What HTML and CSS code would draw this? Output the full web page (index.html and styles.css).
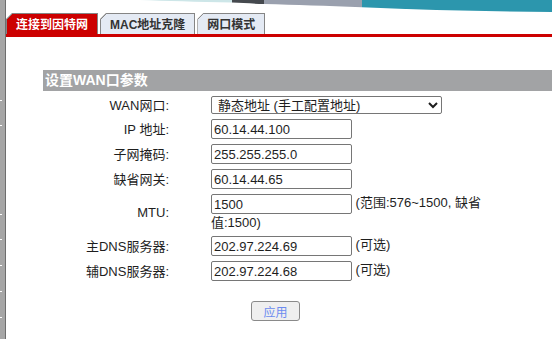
FILE: index.html
```html
<!DOCTYPE html>
<html lang="zh-CN">
<head>
    <meta charset="UTF-8">
    <title>WAN口设置</title>
    <link rel="stylesheet" href="styles.css">
</head>
<body>
    <div class="page">
        <div class="side">
            <span class="tick t1"></span>
            <span class="tick t2"></span>
            <span class="tick t3"></span>
            <span class="tick t4"></span>
            <span class="tick t5"></span>
            <span class="tick t6"></span>
            <span class="tick t7"></span>
        </div>
        <div class="main">
            <svg class="banner" viewBox="0 0 546 13" width="546" height="13">
                <path d="M134 0 L226 0 L226 2.6 C190 1.8 160 1 134 0 Z" fill="#cde6e8"/>
                <path d="M226 0 L258 0 L258 4.1 C246 3.6 236 3.1 226 2.6 Z" fill="#45494e"/>
                <path d="M258 0 L356 0 L356 7.3 C320 6 290 5 258 4.1 Z" fill="#9aa0ae"/>
                <path d="M356 0 L546 0 L546 12 C480 11.5 420 10 356 7.3 Z" fill="#2c96ad"/>
            </svg>
            <div class="tabs">
                <div class="tab active">连接到因特网</div>
                <div class="tab">MAC地址克隆</div>
                <div class="tab">网口模式</div>
            </div>
            <div class="content">
                <div class="section-title">设置WAN口参数</div>
                <div class="form">
                    <div class="row">
                        <label>WAN网口:</label>
                        <div class="field">
                            <select>
                                <option>静态地址 (手工配置地址)</option>
                                <option>动态地址 (DHCP)</option>
                                <option>PPPoE</option>
                            </select>
                        </div>
                    </div>
                    <div class="row">
                        <label>IP 地址:</label>
                        <div class="field"><input type="text" value="60.14.44.100"></div>
                    </div>
                    <div class="row">
                        <label>子网掩码:</label>
                        <div class="field"><input type="text" value="255.255.255.0"></div>
                    </div>
                    <div class="row">
                        <label>缺省网关:</label>
                        <div class="field"><input type="text" value="60.14.44.65"></div>
                    </div>
                    <div class="row">
                        <label>MTU:</label>
                        <div class="field"><input type="text" value="1500"> (范围:576~1500, 缺省值:1500)</div>
                    </div>
                    <div class="row">
                        <label>主DNS服务器:</label>
                        <div class="field"><input type="text" value="202.97.224.69"> (可选)</div>
                    </div>
                    <div class="row">
                        <label>辅DNS服务器:</label>
                        <div class="field"><input type="text" value="202.97.224.68"> (可选)</div>
                    </div>
                </div>
                <div class="actions">
                    <button>应用</button>
                </div>
            </div>
        </div>
    </div>
</body>
</html>
```

FILE: styles.css
```css
body {
    margin: 0;
    font-family: "Liberation Sans", "Noto Sans CJK SC", sans-serif;
    font-size: 13px;
    line-height: 17px;
    color: #1e1e1e;
    background: #fff;
}
.page {
    display: flex;
    height: 339px;
    overflow: hidden;
}
.side {
    position: relative;
    flex: none;
    width: 5px;
    background: #a6a6a6;
    border-right: 1px solid #6e6e6e;
}
.tick {
    position: absolute;
    left: 0;
    width: 2px;
    height: 1px;
    background: #fff;
}
.t1 { top: 100px; }
.t2 { top: 125px; }
.t3 { top: 214px; }
.t4 { top: 239px; }
.t5 { top: 265px; }
.t6 { top: 291px; }
.t7 { top: 317px; }
.main {
    flex: 1;
    min-width: 0;
}
.banner {
    display: block;
    width: 546px;
    height: 13px;
}
.tabs {
    display: flex;
    gap: 2px;
    height: 21px;
    border-bottom: 3px solid #cc0000;
}
.tab {
    box-sizing: border-box;
    height: 21px;
    padding: 3px 9px 0;
    border: 1px solid #858585;
    border-bottom: 0;
    font-size: 12px;
    font-weight: bold;
    line-height: 17px;
    color: #333;
    background: linear-gradient(135deg, transparent 4px, #858585 4px, #858585 5px, #e4eaf4 5px);
    background-origin: border-box;
    clip-path: polygon(6px 0, 100% 0, 100% 100%, 0 100%, 0 6px);
}
.tab.active {
    color: #fff;
    background: linear-gradient(135deg, transparent 4px, #858585 4px, #858585 5px, #cc0000 5px);
    background-origin: border-box;
}
.content {
    padding: 33px 0 0 37px;
}
.section-title {
    height: 21px;
    padding-left: 2px;
    background: #a2a3a5;
    color: #fff;
    font-size: 14px;
    font-weight: bold;
    line-height: 21px;
    margin-bottom: 5px;
}
.form {
    display: flex;
    flex-direction: column;
    gap: 5px;
}
.row {
    display: grid;
    grid-template-columns: 126px 276px;
    column-gap: 42px;
    align-items: center;
}
.row label {
    text-align: right;
}
.field {
    line-height: 17px;
}
select {
    box-sizing: border-box;
    width: 231px;
    height: 18px;
    padding: 0 2px;
    border: 1px solid #767676;
    border-radius: 2px;
    font-family: inherit;
    font-size: 13px;
    color: #1e1e1e;
    background: #fff;
    vertical-align: top;
}
input {
    box-sizing: border-box;
    width: 141px;
    height: 20px;
    padding: 0 2px;
    border: 1px solid #767676;
    border-radius: 2px;
    font-family: inherit;
    font-size: 13px;
    color: #1e1e1e;
    vertical-align: middle;
}
.actions {
    width: 465px;
    margin-top: 20px;
    text-align: center;
}
button {
    width: 49px;
    height: 20px;
    padding: 0;
    border: 1px solid #8a8a8a;
    border-radius: 3px;
    background: #efefef;
    color: #6c8cf0;
    font-family: inherit;
    font-size: 12px;
}
```
